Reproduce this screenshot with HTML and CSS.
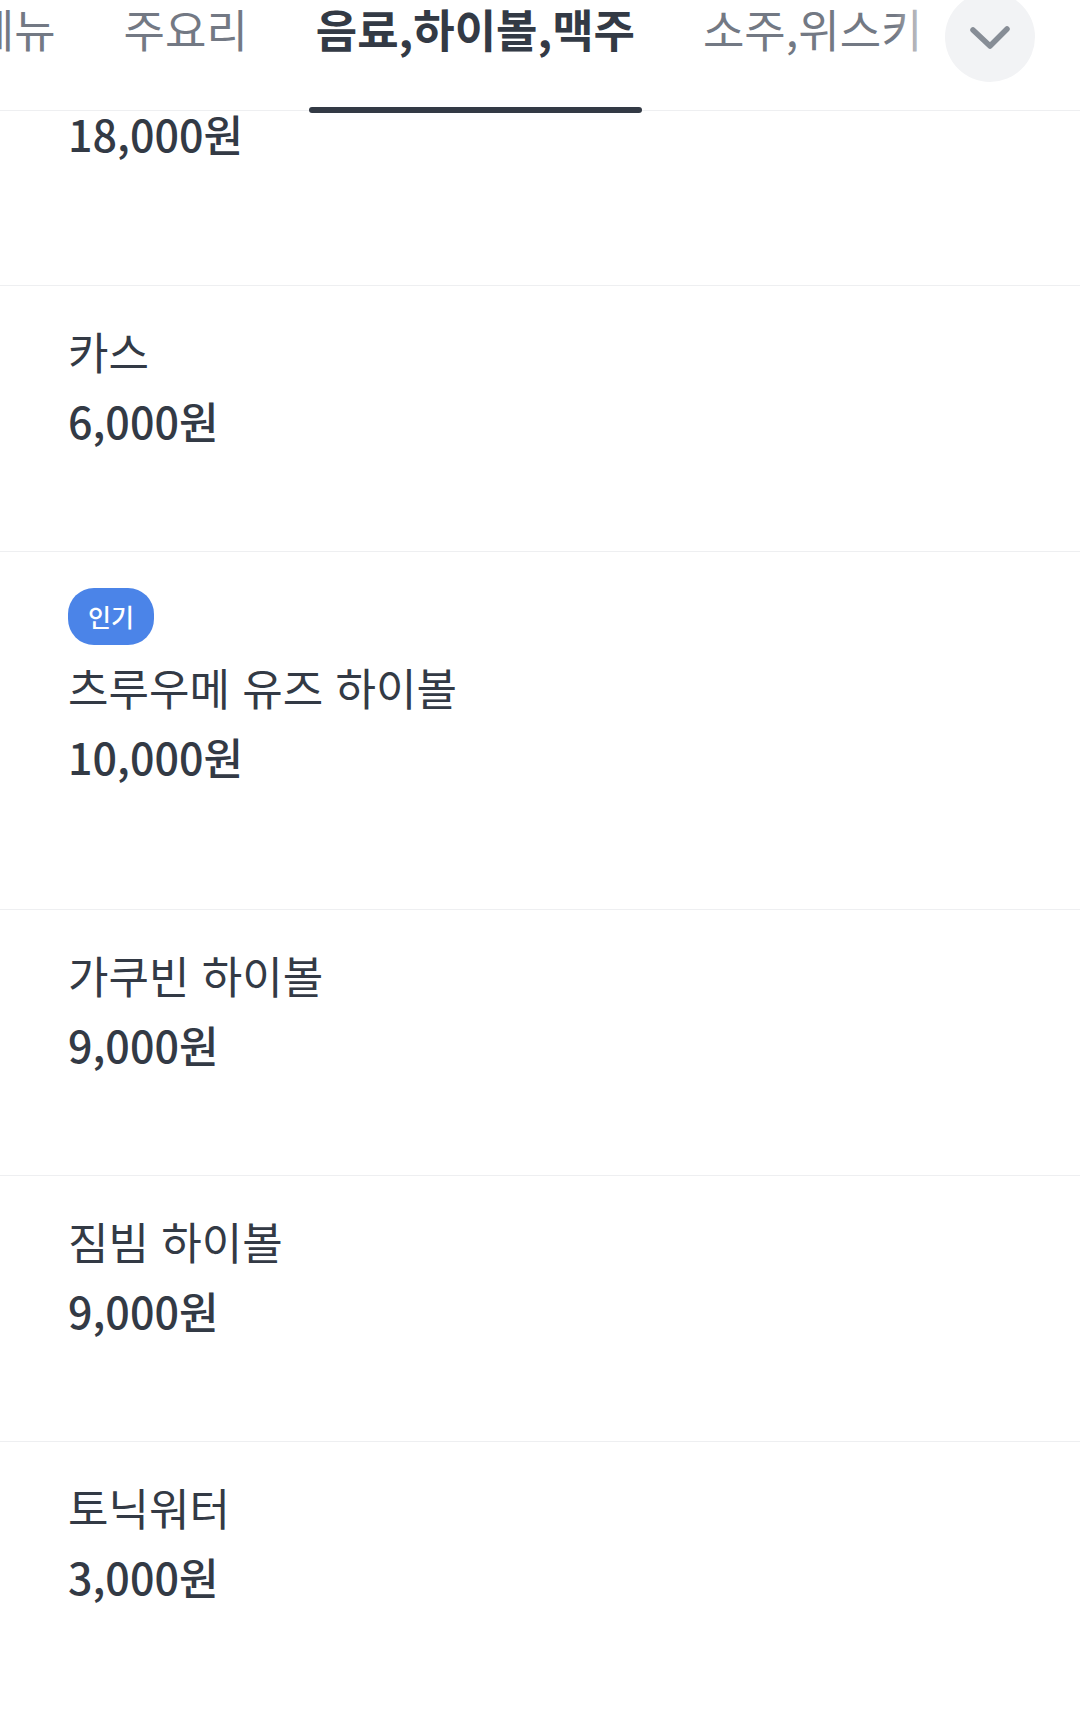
FILE: index.html
```html
<!DOCTYPE html>
<html lang="ko">
<head>
    <meta charset="UTF-8">
    <meta name="viewport" content="width=device-width, initial-scale=1.0">
    <title>메뉴</title>
    <link rel="stylesheet" href="styles.css">
</head>
<body>

    <nav class="tabbar">
        <div class="tabs">
            <a class="tab" href="#">추천메뉴</a>
            <a class="tab" href="#">주요리</a>
            <a class="tab active" href="#">음료,하이볼,맥주</a>
            <a class="tab" href="#">소주,위스키</a>
            <a class="tab" href="#">사이드</a>
        </div>
        <div class="tab-end">
            <button class="more" type="button" aria-label="카테고리 전체보기">
                <svg width="90" height="90" viewBox="0 0 90 90">
                    <path d="M28 38 L45 54 L62 37" fill="none" stroke="#878d96" stroke-width="5.5" stroke-linecap="round" stroke-linejoin="round"/>
                </svg>
            </button>
        </div>
    </nav>

    <ul class="menu">
        <li class="item first">
            <p class="price">18,000원</p>
        </li>
        <li class="item">
            <p class="name">카스</p>
            <p class="price">6,000원</p>
        </li>
        <li class="item popular">
            <span class="badge">인기</span>
            <p class="name">츠루우메 유즈 하이볼</p>
            <p class="price">10,000원</p>
        </li>
        <li class="item">
            <p class="name">가쿠빈 하이볼</p>
            <p class="price">9,000원</p>
        </li>
        <li class="item">
            <p class="name">짐빔 하이볼</p>
            <p class="price">9,000원</p>
        </li>
        <li class="item">
            <p class="name">토닉워터</p>
            <p class="price">3,000원</p>
        </li>
    </ul>

</body>
</html>
```

FILE: styles.css
```css
body {
    margin: 0;
    font-family: "Noto Sans CJK KR", "Noto Sans", sans-serif;
    color: #333a45;
    background: #fff;
    overflow-x: hidden;
}

/* category tabs */
.tabbar {
    position: relative;
    height: 110px;
    border-bottom: 1px solid #eeeff1;
    overflow-x: clip;
}
.tabs {
    display: flex;
    gap: 54px;
    margin-left: -117px;
    white-space: nowrap;
}
.tab {
    position: relative;
    display: block;
    height: 110px;
    padding: 0 7px;
    font-size: 45px;
    line-height: 57px;
    color: #737984;
    text-decoration: none;
}
.tab.active {
    color: #333a45;
    font-weight: 700;
}
.tab.active::after {
    content: "";
    position: absolute;
    left: 0;
    right: 0;
    bottom: -3px;
    height: 6px;
    border-radius: 3px;
    background: #333a45;
}
.tab-end {
    position: absolute;
    top: 0;
    right: 0;
    height: 109px;
    padding: 0 45px 0 50px;
    background: linear-gradient(to right, rgba(255, 255, 255, 0), #fff 45px);
}
.more {
    display: block;
    width: 90px;
    height: 90px;
    margin-top: -8px;
    padding: 0;
    border: none;
    border-radius: 50%;
    background: #f2f3f5;
}
.more svg {
    display: block;
}

/* menu list */
.menu {
    list-style: none;
    margin: 0;
    padding: 0;
}
.item {
    padding: 35px 68px 109px;
    border-top: 1px solid #eeeff1;
}
.item.first {
    padding-top: 0;
    padding-bottom: 130px;
    border-top: none;
}
.item.popular {
    padding-top: 36px;
    padding-bottom: 131px;
}
.item:last-child {
    padding-bottom: 140px;
}
.item p {
    margin: 0;
}
.name {
    font-size: 44px;
    line-height: 60px;
}
.price {
    margin-top: 17px !important;
    font-size: 43px;
    font-weight: 500;
    line-height: 44px;
}
.item.first .price {
    margin-top: 0 !important;
}
.badge {
    display: inline-block;
    height: 57px;
    margin-bottom: 12px;
    padding: 0 20px;
    border-radius: 26px;
    background: #4b84e8;
    color: #fff;
    font-size: 25px;
    font-weight: 500;
    line-height: 57px;
    vertical-align: top;
}
```
